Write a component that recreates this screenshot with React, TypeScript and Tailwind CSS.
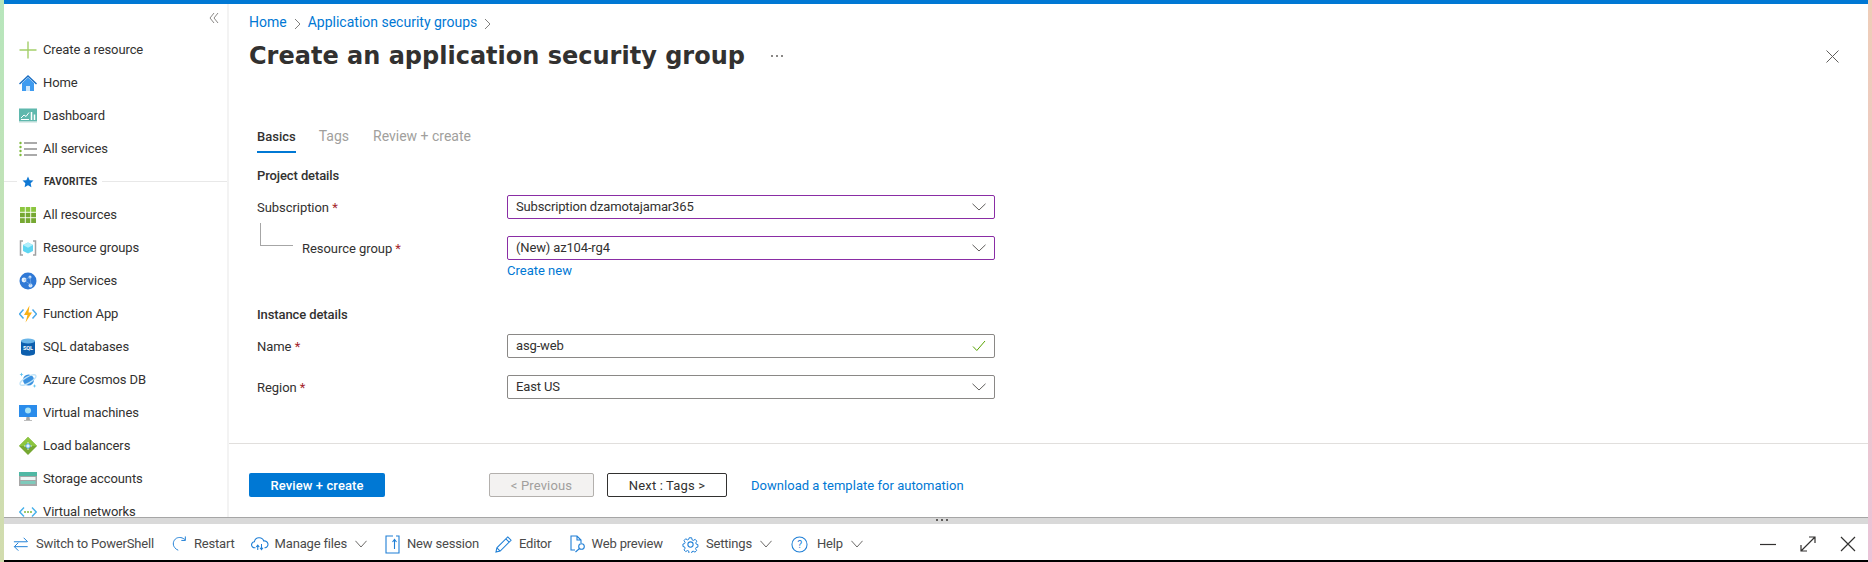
import type { ReactNode } from "react";

const font = "font-['Roboto','Liberation_Sans',sans-serif]";

function Svg({ size = 18, className = "", children }: { size?: number; className?: string; children: ReactNode }) {
  return (
    <svg width={size} height={size} viewBox="0 0 18 18" fill="none" className={`shrink-0 ${className}`}>
      {children}
    </svg>
  );
}

const navIcons: Record<string, ReactNode> = {
  plus: (
    <Svg>
      <path d="M9 0.5v17M0.5 9h17" stroke="#a4cf6a" strokeWidth="1.4" />
    </Svg>
  ),
  home: (
    <Svg>
      <path d="M9 1L0 9.5l1 1 8-7.5 8 7.5 1-1z" fill="#1b6ec2" />
      <path d="M3 9l6-5.5L15 9v8h-4v-5H7v5H3z" fill="#3e9bf0" />
      <rect x="7" y="12" width="4" height="5" fill="#cfe7fb" />
    </Svg>
  ),
  dashboard: (
    <Svg>
      <rect y="1.5" width="18" height="13" fill="#5fb8ad" />
      <rect y="14" width="18" height="1.5" fill="#b9dcd8" />
      <path d="M2 11l3-3 2 1.5 3-4" stroke="#fff" strokeWidth="1" />
      <path d="M2 12.5h8" stroke="#fff" strokeWidth="1" />
      <path d="M12.5 5v8M15.5 7.5V13" stroke="#fff" strokeWidth="1.5" />
    </Svg>
  ),
  services: (
    <Svg>
      <path d="M5 3h13M5 9h13M5 15h13" stroke="#8f8f8f" strokeWidth="1.3" />
      <circle cx="1.5" cy="3" r="1.2" fill="#7fba3c" />
      <circle cx="1.5" cy="7" r="1.2" fill="#7fba3c" />
      <circle cx="1.5" cy="11" r="1.2" fill="#7fba3c" />
      <circle cx="1.5" cy="15" r="1.2" fill="#7fba3c" />
    </Svg>
  ),
  allres: (
    <Svg>
      <rect x="1" y="1" width="16" height="16" fill="#76a832" />
      <rect x="1" y="1" width="16" height="6" fill="#8cc63f" />
      <path d="M6.3 1v16M11.7 1v16M1 6.3h16M1 11.7h16" stroke="#fff" strokeWidth="0.9" />
    </Svg>
  ),
  rg: (
    <Svg>
      <path d="M4 2H1.5v14H4M14 2h2.5v14H14" stroke="#a0a1a2" strokeWidth="1.5" />
      <path d="M9 3.5l5 2.6v5.8l-5 2.6-5-2.6V6.100z" fill="#5ed6f2" />
      <path d="M9 3.500l5 2.600-5 2.700-5-2.700z" fill="#b0eefb" />
    </Svg>
  ),
  app: (
    <Svg>
      <circle cx="9" cy="9" r="8.500" fill="#2f79d6" />
      <circle cx="5" cy="8" r="2.400" fill="#e6f1fb" />
      <circle cx="11" cy="5" r="1.500" fill="#cfe3f8" />
      <circle cx="11.500" cy="13.500" r="2" fill="#cfe3f8" />
      <path d="M5 8l6-3 1 8z" stroke="#7fb1ea" strokeWidth="0.600" />
    </Svg>
  ),
  func: (
    <Svg>
      <path d="M4.500 4.500L0.500 9l4 4.500M13.500 4.500l4 4.500-4 4.500" stroke="#47a8e8" strokeWidth="1.500" />
      <path d="M10.500 0.500L5 10h3.500L6.500 17.500 13 7.500H9.500z" fill="#f9b115" />
    </Svg>
  ),
  sql: (
    <Svg>
      <path d="M2 3v12c0 1.700 3 2.800 7 2.800s7-1.100 7-2.800V3z" fill="#0d5fae" />
      <ellipse cx="9" cy="3" rx="7" ry="2.500" fill="#6ab5e8" />
      <text x="9" y="12" textAnchor="middle" fontSize="5.500" fontWeight="700" fill="#fff" fontFamily="Roboto">SQL</text>
    </Svg>
  ),
  cosmos: (
    <Svg>
      <circle cx="9.500" cy="9" r="5.500" fill="#3b92e0" />
      <ellipse cx="9" cy="9" rx="9" ry="3" transform="rotate(-30 9 9)" stroke="#bfe3f8" strokeWidth="1.300" />
      <path d="M2.500 1.500l.6 1.400 1.400.6-1.400.6-.6 1.400-.6-1.400-1.400-.6 1.400-.6zM15.500 13l.5 1.500 1.500.5-1.500.5-.5 1.500-.5-1.500-1.500-.5 1.500-.5z" fill="#5fc4f0" />
    </Svg>
  ),
  vm: (
    <Svg>
      <rect y="1" width="18" height="12" fill="#2a8ceb" />
      <circle cx="9" cy="6.500" r="3" fill="#a8e3f7" />
      <path d="M7.500 13h3l.5 3h-4z" fill="#a6a6a6" />
      <rect x="5" y="16" width="8" height="1" fill="#bdbdbd" />
    </Svg>
  ),
  lb: (
    <Svg>
      <path d="M9 0l9 9-9 9-9-9z" fill="#76a832" />
      <path d="M9 0l9 9H0z" fill="#8cc63f" />
      <path d="M9 5v8M5 9h8" stroke="#fff" strokeWidth="0.800" />
      <circle cx="9" cy="9" r="2.200" fill="#e6f4fb" stroke="#3e9bf0" strokeWidth="0.800" />
    </Svg>
  ),
  storage: (
    <Svg>
      <rect y="2" width="18" height="14" fill="#a6a6a6" />
      <rect y="2" width="18" height="4" fill="#4fb8a4" />
      <rect x="1.500" y="7" width="15" height="3" fill="#eef6f5" />
      <rect x="1.500" y="11" width="15" height="3" fill="#7ecabb" />
    </Svg>
  ),
  vnet: (
    <Svg>
      <path d="M5 4.500L0.800 9 5 13.500M13 4.500L17.200 9 13 13.500" stroke="#45b0ea" strokeWidth="1.400" />
      <circle cx="6" cy="9" r="1" fill="#7fba3c" />
      <circle cx="9" cy="9" r="1" fill="#7fba3c" />
      <circle cx="12" cy="9" r="1" fill="#7fba3c" />
    </Svg>
  ),
};

const topNav = [
  ["plus", "Create a resource"],
  ["home", "Home"],
  ["dashboard", "Dashboard"],
  ["services", "All services"],
];

const favNav = [
  ["allres", "All resources"],
  ["rg", "Resource groups"],
  ["app", "App Services"],
  ["func", "Function App"],
  ["sql", "SQL databases"],
  ["cosmos", "Azure Cosmos DB"],
  ["vm", "Virtual machines"],
  ["lb", "Load balancers"],
  ["storage", "Storage accounts"],
  ["vnet", "Virtual networks"],
];

function NavRow({ icon, label }: { icon: string; label: string }) {
  return (
    <div className="flex h-[33px] shrink-0 items-center gap-[6px] pl-[15px] text-[13px] tracking-[-0.1px] text-[#323130]">
      {navIcons[icon]}
      <span>{label}</span>
    </div>
  );
}

function Sidebar() {
  return (
    <aside className="flex h-full w-[225px] shrink-0 flex-col overflow-hidden border-r-2 border-[#f3f3f3] bg-white">
      <div className="flex h-[29px] shrink-0 items-start justify-end pr-[8px] pt-[8px]">
        <svg width="10" height="12" viewBox="0 0 10 12" fill="none">
          <path d="M5 1L1 6l4 5M9 1L5 6l4 5" stroke="#8a8886" strokeWidth="1" />
        </svg>
      </div>
      {topNav.map(([icon, label]) => (
        <NavRow key={label} icon={icon} label={label} />
      ))}
      <div className="flex h-[33px] shrink-0 items-center text-[10px] font-bold tracking-[0.2px] text-[#323130]">
        <div className="h-px w-[13px] bg-[#e8e8e8]" />
        <svg width="12" height="12" viewBox="0 0 24 24" className="ml-[5px]">
          <path d="M12 1l3.300 7.300 7.700.9-5.700 5.300 1.500 7.800L12 18.400 5.200 22.300l1.500-7.800L1 9.200l7.700-.9z" fill="#0f78d4" />
        </svg>
        <span className="ml-[10px]">FAVORITES</span>
        <div className="ml-[5px] h-px flex-1 bg-[#e8e8e8]" />
      </div>
      {favNav.map(([icon, label]) => (
        <NavRow key={label} icon={icon} label={label} />
      ))}
    </aside>
  );
}

function Chevron({ width = 14, className = "" }: { width?: number; className?: string }) {
  return (
    <svg width={width} height="8" viewBox="0 0 14 8" preserveAspectRatio="none" fill="none" className={className}>
      <path d="M0.500 0.800L7 7l6.500-6.200" stroke="#605e5c" strokeWidth="1" />
    </svg>
  );
}

function Field({
  value,
  purple = false,
  check = false,
}: {
  value: string;
  purple?: boolean;
  check?: boolean;
}) {
  return (
    <div
      className={`flex h-[24px] w-[488px] items-center justify-between rounded-[2px] border pl-[8px] pr-[8px] text-[13px] tracking-[-0.15px] text-[#323130] ${
        purple ? "border-[#8a2da5]" : "border-[#8a8886]"
      }`}
    >
      <span>{value}</span>
      {check ? (
        <svg width="14" height="12" viewBox="0 0 14 12" fill="none">
          <path d="M1 6.500L4.800 10.500 13 1" stroke="#57a300" strokeWidth="1" />
        </svg>
      ) : (
        <Chevron />
      )}
    </div>
  );
}

function Label({ text }: { text: string }) {
  return (
    <span className="text-[13px] tracking-[-0.05px] text-[#323130]">
      {text} <span className="text-[#a4262c]">*</span>
    </span>
  );
}

function MainPane() {
  return (
    <main className="relative flex h-full min-w-0 flex-1 flex-col bg-white">
      <div className="flex h-[35px] shrink-0 items-end gap-[7px] pb-[6px] pl-[20px] text-[14px] text-[#0078d4]">
        <span>Home</span>
        <svg width="7" height="12" viewBox="0 0 7 12" fill="none" className="mb-[3px]">
          <path d="M1 1l5 5-5 5" stroke="#605e5c" strokeWidth="0.800" />
        </svg>
        <span>Application security groups</span>
        <svg width="7" height="12" viewBox="0 0 7 12" fill="none" className="mb-[3px]">
          <path d="M1 1l5 5-5 5" stroke="#605e5c" strokeWidth="0.800" />
        </svg>
      </div>
      <div className="flex h-[34px] shrink-0 items-center pl-[20px] pr-[29px]">
        <h1 className="font-['DejaVu_Sans',sans-serif] text-[24px] font-bold text-[#323130]">
          Create an application security group
        </h1>
        <span className="ml-[26px] flex gap-[3px]">
          <i className="h-[2px] w-[2px] bg-[#8a8886]" />
          <i className="h-[2px] w-[2px] bg-[#8a8886]" />
          <i className="h-[2px] w-[2px] bg-[#8a8886]" />
        </span>
        <svg width="13" height="13" viewBox="0 0 13 13" fill="none" className="ml-auto">
          <path d="M0.500 0.500l12 12M12.500 0.500l-12 12" stroke="#605e5c" strokeWidth="1" />
        </svg>
      </div>

      <div className="flex-1 pl-[28px]">
        <div className="mt-[53px] flex text-[14px] text-[#a19f9d]">
          <div className="flex h-[27px] flex-col justify-between pt-[1px] text-[13px] font-medium text-[#323130]">
            <span>Basics</span>
            <div className="h-[2px] bg-[#0078d4]" />
          </div>
          <span className="ml-[23px]">Tags</span>
          <span className="ml-[24px]">Review + create</span>
        </div>

        <h2 className="mt-[14px] text-[13px] font-medium leading-[18px] tracking-[-0.1px] text-[#323130]">Project details</h2>
        <div className="mt-[10px] flex items-center">
          <div className="w-[250px]">
            <Label text="Subscription" />
          </div>
          <Field value="Subscription dzamotajamar365" purple />
        </div>
        <div className="relative mt-[17px] flex items-center">
          <div className="absolute -top-[13px] left-[3px] h-[23px] w-[33px] border-b border-l border-[#a6a6a6]" />
          <div className="w-[250px] pl-[45px]">
            <Label text="Resource group" />
          </div>
          <Field value="(New) az104-rg4" purple />
        </div>
        <div className="ml-[250px] mt-[2px] text-[13px] leading-[18px] text-[#0078d4]">Create new</div>

        <h2 className="mt-[26px] text-[13px] font-medium leading-[18px] tracking-[-0.1px] text-[#323130]">Instance details</h2>
        <div className="mt-[10px] flex items-center">
          <div className="w-[250px]">
            <Label text="Name" />
          </div>
          <Field value="asg-web" check />
        </div>
        <div className="mt-[17px] flex items-center">
          <div className="w-[250px]">
            <Label text="Region" />
          </div>
          <Field value="East US" />
        </div>
      </div>

      <div className="flex h-[74px] shrink-0 items-start border-t border-[#e1dfdd] pl-[20px] pt-[29px] text-[13px]">
        <div className="flex h-[24px] w-[136px] items-center justify-center rounded-[2px] bg-[#0078d4] pt-[2px] font-medium tracking-[0.1px] text-white">
          Review + create
        </div>
        <div className="ml-[104px] flex h-[24px] w-[105px] items-center justify-center rounded-[2px] border border-[#b3b0ad] bg-[#f3f2f1] pt-[2px] tracking-[0.15px] text-[#a19f9d]">
          &lt; Previous
        </div>
        <div className="ml-[13px] flex h-[24px] w-[120px] items-center justify-center rounded-[2px] border border-[#323130] pt-[2px] tracking-[0.15px] text-[#323130]">
          Next : Tags &gt;
        </div>
        <div className="ml-[24px] flex h-[24px] items-center pt-[2px] tracking-[0.03px] text-[#0078d4]">
          Download a template for automation
        </div>
      </div>
    </main>
  );
}

const stroke = "#1f7fd6";

const toolIcons: Record<string, ReactNode> = {
  swap: (
    <Svg size={16}>
      <path d="M1 6.500h15M12 2l4.500 4.500M1.500 12h15M6 7.500L1.500 12 6 16.500" stroke={stroke} strokeWidth="1.100" />
    </Svg>
  ),
  restart: (
    <Svg size={16}>
      <path d="M5 2.500C1 5 0.500 10 3 13c1 1.300 2.500 2.500 4 3M5 2.500c3-1.500 7-1 10 2M15 .5v4.500h-4.500" stroke={stroke} strokeWidth="1.100" />
    </Svg>
  ),
  cloud: (
    <svg width="18" height="14" viewBox="0 0 24 18" fill="none" className="shrink-0">
      <path d="M6 14H5a4 4 0 0 1-.5-8A6.500 6.500 0 0 1 17 5a4.500 4.500 0 0 1 2 9h-1" stroke={stroke} strokeWidth="1.500" />
      <path d="M9 17v-6m-2 2l2-2.500 2 2.500M14 9v7m-2-2l2 2.500 2-2.500" stroke={stroke} strokeWidth="1.400" />
    </svg>
  ),
  session: (
    <svg width="15" height="19" viewBox="0 0 15 19" fill="none" className="shrink-0">
      <path d="M8 1H1v17h13V1h-3M9.500 5v9M7.500 7l2-2.500 2 2.500" stroke={stroke} strokeWidth="1.100" />
    </svg>
  ),
  editor: (
    <Svg size={17}>
      <path d="M13.500 1l3.500 3.500L5.500 16 1 17l1-4.500zM11.500 3l3.500 3.500M2 12.500L5.500 16" stroke={stroke} strokeWidth="1.100" />
    </Svg>
  ),
  web: (
    <svg width="16" height="18" viewBox="0 0 16 18" fill="none" className="shrink-0">
      <path d="M5 15H1V1h6l4 4v3M7 1v4h4" stroke={stroke} strokeWidth="1.100" />
      <circle cx="11.500" cy="11.500" r="2.800" stroke={stroke} strokeWidth="1.100" />
      <path d="M9.500 13.500L5.500 17" stroke={stroke} strokeWidth="1.100" />
    </svg>
  ),
  settings: (
    <Svg size={17}>
      <circle cx="9" cy="9" r="2.800" stroke={stroke} strokeWidth="1.100" />
      <path
        d="M7.500 1h3l.5 2.500 1.500.7 2.200-1.300 2 2.200-1.300 2.100.6 1.500 2 .5v3l-2.200.5-.6 1.500 1.300 2.100-2 2-2.200-1.200-1.500.6-.5 2.300h-3L7 17l-1.500-.6-2.200 1.200-2-2 1.300-2.100-.6-1.500-2-.5V8.500L2 8l.6-1.500L1.300 4.400l2-2.200L5.500 3.500 7 2.800z"
        transform="translate(1 1) scale(0.880)"
        stroke={stroke}
        strokeWidth="1.200"
      />
    </Svg>
  ),
  help: (
    <Svg size={17}>
      <circle cx="9" cy="9" r="8" stroke={stroke} strokeWidth="1.100" />
      <text x="9" y="13" textAnchor="middle" fontSize="11" fill={stroke} fontFamily="Roboto">?</text>
    </Svg>
  ),
};

const tools: { icon: string; label: string; chevron?: boolean; ml: string; gap: string }[] = [
  { icon: "swap", label: "Switch to PowerShell", ml: "ml-[9px]", gap: "ml-[7px]" },
  { icon: "restart", label: "Restart", ml: "ml-[18px]", gap: "ml-[6px]" },
  { icon: "cloud", label: "Manage files", chevron: true, ml: "ml-[16px]", gap: "ml-[6px]" },
  { icon: "session", label: "New session", ml: "ml-[18px]", gap: "ml-[7px]" },
  { icon: "editor", label: "Editor", ml: "ml-[16px]", gap: "ml-[7px]" },
  { icon: "web", label: "Web preview", ml: "ml-[18px]", gap: "ml-[6px]" },
  { icon: "settings", label: "Settings", chevron: true, ml: "ml-[19px]", gap: "ml-[7px]" },
  { icon: "help", label: "Help", chevron: true, ml: "ml-[19px]", gap: "ml-[9px]" },
];

function Toolbar() {
  return (
    <div className="flex h-[36px] shrink-0 items-center bg-white pt-[4px] text-[13px] tracking-[-0.18px] text-[#4a4a4a]">
      {tools.map((t) => (
        <div key={t.label} className={`flex items-center ${t.ml}`}>
          {toolIcons[t.icon]}
          <span className={t.gap}>{t.label}</span>
          {t.chevron && <Chevron width={12} className="ml-[8px]" />}
        </div>
      ))}
      <div className="ml-auto flex items-center gap-[24px] pr-[12px]">
        <svg width="16" height="16" viewBox="0 0 16 16" fill="none">
          <path d="M0 8.500h16" stroke="#323130" strokeWidth="1.200" />
        </svg>
        <svg width="16" height="16" viewBox="0 0 16 16" fill="none">
          <path d="M1 15L15 1M9 1h6v6M1 9v6h6" stroke="#323130" strokeWidth="1.200" />
        </svg>
        <svg width="16" height="16" viewBox="0 0 16 16" fill="none">
          <path d="M1 1l14 14M15 1L1 15" stroke="#323130" strokeWidth="1.200" />
        </svg>
      </div>
    </div>
  );
}

export default function App() {
  return (
    <div className={`flex h-[562px] w-[1872px] overflow-hidden bg-white ${font}`}>
      <div className="w-[4px] shrink-0 bg-gradient-to-b from-[#b7e6bc] to-[#d2dcae]" />
      <div className="flex min-w-0 flex-1 flex-col">
        <div className="h-[4px] shrink-0 bg-[#0078d4]" />
        <div className="flex min-h-0 flex-1">
          <Sidebar />
          <MainPane />
        </div>
        <div className="flex h-[7px] shrink-0 justify-end border-t border-[#a6a6a6] bg-[#d9d9d9] pr-[920px] pt-[1px]">
          <span className="flex gap-[3px]">
            <i className="h-[2px] w-[2px] bg-[#605e5c]" />
            <i className="h-[2px] w-[2px] bg-[#605e5c]" />
            <i className="h-[2px] w-[2px] bg-[#605e5c]" />
          </span>
        </div>
        <Toolbar />
        <div className="h-[2px] shrink-0 bg-black" />
      </div>
      <div className="w-[4px] shrink-0 bg-gradient-to-b from-[#efcdb8] to-[#ebc3d8]" />
    </div>
  );
}
